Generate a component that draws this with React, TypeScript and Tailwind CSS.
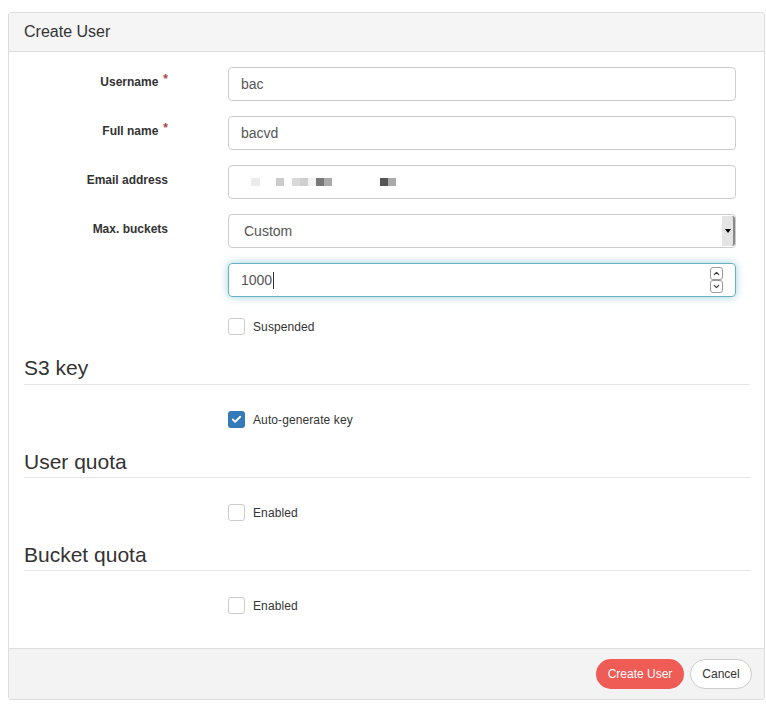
import { Check, ChevronDown, ChevronUp } from "lucide-react";

const redacted = [
  { ml: 22, w: 9, c: "bg-[#ececec]" },
  { ml: 16, w: 8, c: "bg-[#cccccc]" },
  { ml: 8, w: 8, c: "bg-[#d9d9d9]" },
  { ml: 0, w: 8, c: "bg-[#cfcfcf]" },
  { ml: 0, w: 8, c: "bg-[#f3f3f3]" },
  { ml: 0, w: 8, c: "bg-[#777777]" },
  { ml: 0, w: 8, c: "bg-[#aaaaaa]" },
  { ml: 48, w: 8, c: "bg-[#555555]" },
  { ml: 0, w: 8, c: "bg-[#aaaaaa]" },
];

function FieldRow({ label, required, children }: { label: string; required?: boolean; children: React.ReactNode }) {
  return (
    <div className="flex">
      <div className="w-[159px] pt-[7px] text-right text-[12px] font-bold leading-[17px] text-[#333]">
        {label}
        {required ? <span className="relative -top-[3px] ml-[5px] text-[#a94442]">*</span> : null}
      </div>
      <div className="ml-[60px] w-[508px]">{children}</div>
    </div>
  );
}

function CheckRow({ label, checked }: { label: string; checked?: boolean }) {
  return (
    <div className="flex h-[17px] items-center pl-[219px]">
      <span
        className={
          checked
            ? "flex h-[17px] w-[17px] items-center justify-center rounded-[3px] bg-[#337ab7]"
            : "h-[17px] w-[17px] rounded-[3px] border border-[#cccccc] bg-white"
        }
      >
        {checked ? <Check className="h-[11px] w-[11px] text-white" strokeWidth={4} /> : null}
      </span>
      <span className="ml-[8px] text-[12px] tracking-[0.1px] text-[#333]">{label}</span>
    </div>
  );
}

function SectionHeading({ title, className }: { title: string; className: string }) {
  return (
    <div className={`mr-[14px] ml-[15px] border-b border-[#e5e5e5] ${className}`}>
      <h3 className="text-[21px] leading-[22px] text-[#333]">{title}</h3>
    </div>
  );
}

export default function App() {
  return (
    <div className="min-h-[717px] bg-white pt-[12px] pl-[8px] font-['Liberation_Sans',Arial,sans-serif]">
      <div className="w-[757px] overflow-hidden rounded-[3px] border border-[#dddddd]">
        <div className="flex h-[39px] items-center border-b border-[#dddddd] bg-[#f5f5f5] pl-[15px] text-[16px] text-[#333]">
          Create User
        </div>

        <div className="pt-[15px] pb-[34px]">
          <div className="flex flex-col gap-[15px]">
            <FieldRow label="Username" required>
              <div className="flex h-[34px] items-center rounded-[4px] border border-[#cccccc] px-[12px] text-[14px] text-[#555]">
                bac
              </div>
            </FieldRow>
            <FieldRow label="Full name" required>
              <div className="flex h-[34px] items-center rounded-[4px] border border-[#cccccc] px-[12px] text-[14px] text-[#555]">
                bacvd
              </div>
            </FieldRow>
            <FieldRow label="Email address">
              <div className="flex h-[34px] items-center rounded-[4px] border border-[#cccccc]">
                {redacted.map((b, i) => (
                  <span key={i} className={`h-[8px] ${b.c}`} style={{ width: b.w, marginLeft: b.ml }} />
                ))}
              </div>
            </FieldRow>
            <FieldRow label="Max. buckets">
              <div className="flex h-[34px] items-stretch overflow-hidden rounded-[4px] border border-[#cccccc]">
                <div className="flex flex-1 items-center pl-[15px] text-[14px] text-[#555]">Custom</div>
                <div className="my-[1px] flex w-[13px] items-center justify-center rounded-r-[3px] border-r-2 border-[#888] bg-[#e4e4e4]">
                  <span className="h-0 w-0 border-x-[3px] border-t-[4px] border-x-transparent border-t-black" />
                </div>
              </div>
            </FieldRow>
            <FieldRow label="">
              <div className="flex h-[34px] items-center rounded-[4px] border border-[#66b3c2] px-[12px] text-[14px] text-[#555] shadow-[0_0_8px_rgba(102,179,194,0.6)]">
                <span>1000</span>
                <span className="ml-[1px] h-[17px] w-px bg-[#333]" />
                <div className="ml-auto flex flex-col">
                  <span className="flex h-[13px] w-[13px] items-center justify-center rounded-[3px] border border-[#999] bg-white">
                    <ChevronUp className="h-[9px] w-[9px] text-[#333]" strokeWidth={3} />
                  </span>
                  <span className="flex h-[13px] w-[13px] items-center justify-center rounded-[3px] border border-[#999] bg-white">
                    <ChevronDown className="h-[9px] w-[9px] text-[#333]" strokeWidth={3} />
                  </span>
                </div>
              </div>
            </FieldRow>
          </div>

          <div className="mt-[21px]">
            <CheckRow label="Suspended" />
          </div>

          <SectionHeading title="S3 key" className="mt-[22px] pb-[5px]" />
          <div className="mt-[26px]">
            <CheckRow label="Auto-generate key" checked />
          </div>

          <SectionHeading title="User quota" className="mt-[23px] pb-[4px]" />
          <div className="mt-[26px]">
            <CheckRow label="Enabled" />
          </div>

          <SectionHeading title="Bucket quota" className="mt-[23px] pb-[4px]" />
          <div className="mt-[26px]">
            <CheckRow label="Enabled" />
          </div>
        </div>

        <div className="flex h-[51px] items-center justify-end gap-[6px] border-t border-[#dddddd] bg-[#f3f3f3] pr-[12px]">
          <button className="h-[30px] w-[88px] rounded-full bg-[#ef5b55] text-[12px] text-white">Create User</button>
          <button className="h-[30px] w-[62px] rounded-full border border-[#cccccc] bg-white text-[12px] text-[#333]">
            Cancel
          </button>
        </div>
      </div>
    </div>
  );
}
